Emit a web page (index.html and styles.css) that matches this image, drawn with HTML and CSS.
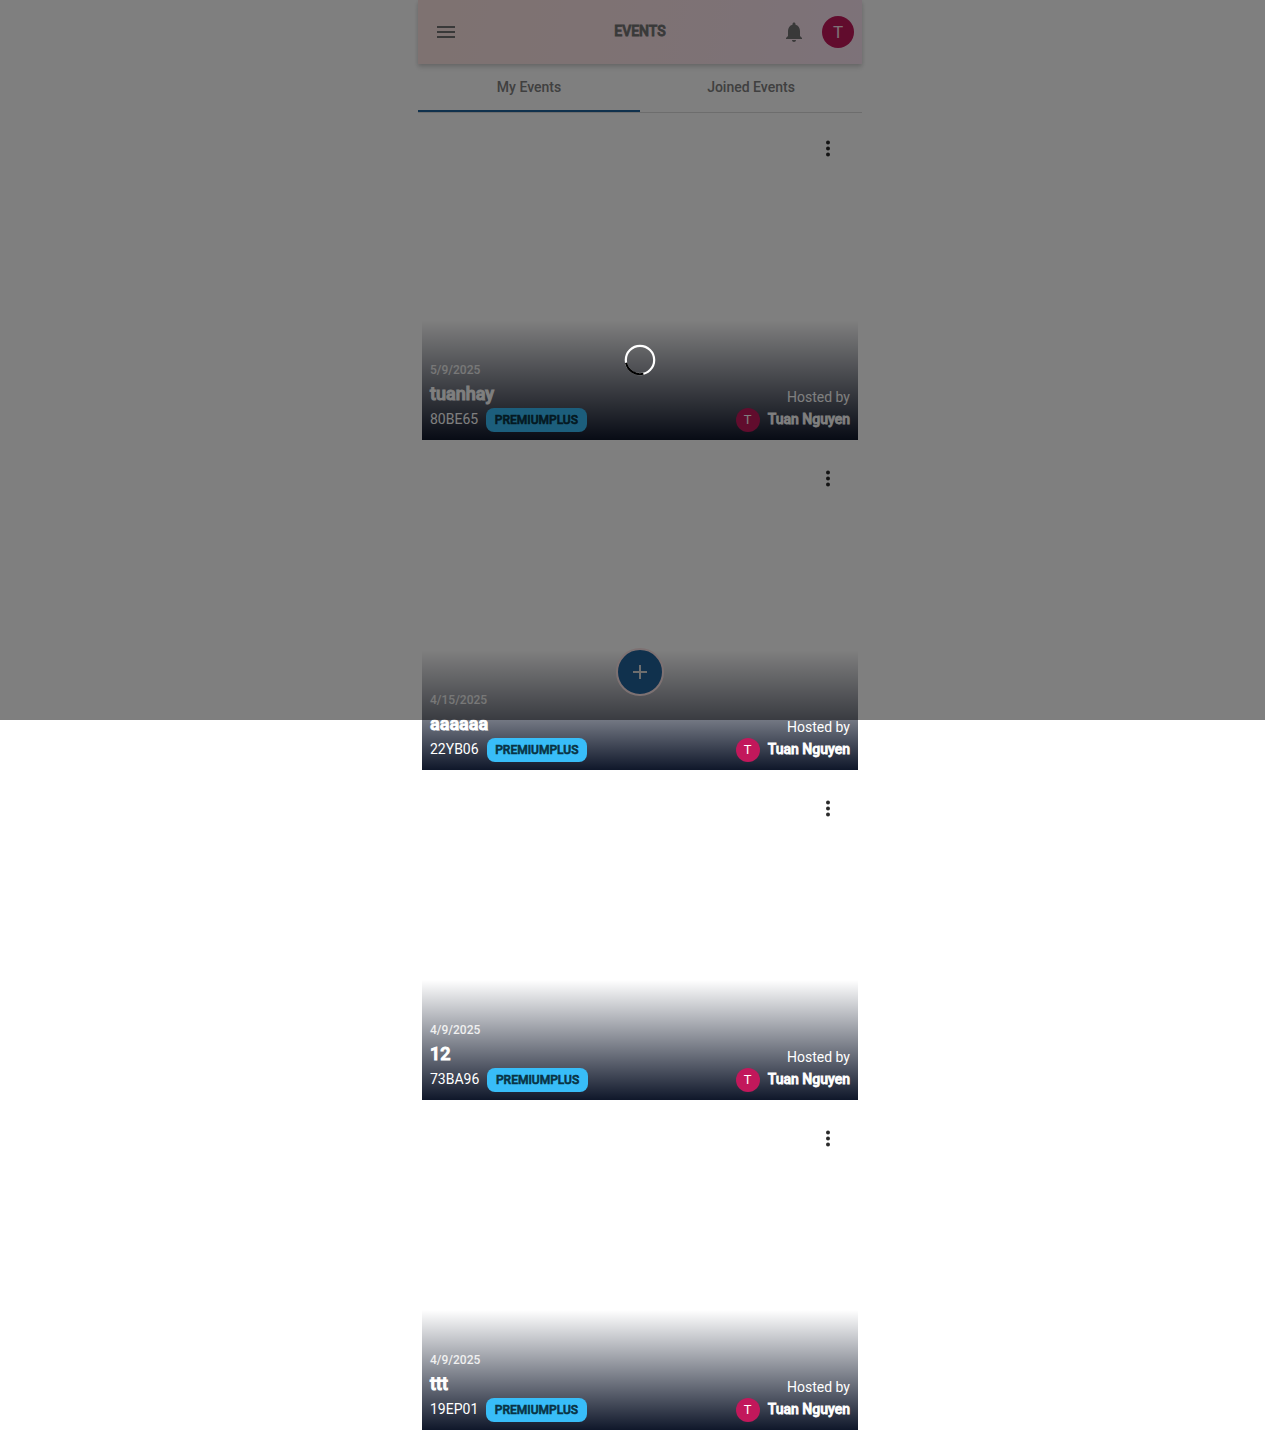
FILE: index.html
```html
<!DOCTYPE html>
<html lang="en">
<head>
<meta charset="utf-8">
<title>Events</title>
<link rel="stylesheet" href="styles.css">
</head>
<body>
<div class="app">
  <header class="bar">
    <svg class="icon menu" viewBox="0 0 24 24"><path d="M3 18h18v-2H3v2zm0-5h18v-2H3v2zm0-7v2h18V6H3z"/></svg>
    <h1 class="heading faux">EVENTS</h1>
    <div class="actions">
      <svg class="icon" viewBox="0 0 24 24"><path d="M12 22c1.1 0 2-.9 2-2h-4c0 1.1.89 2 2 2zm6-6v-5c0-3.07-1.64-5.64-4.5-6.32V4c0-.83-.67-1.5-1.5-1.5s-1.5.67-1.5 1.5v.68C7.63 5.36 6 7.92 6 11v5l-2 2v1h16v-1l-2-2z"/></svg>
      <span class="avatar large">T</span>
    </div>
  </header>
  <nav class="tabs">
    <a class="tab active">My Events</a>
    <a class="tab">Joined Events</a>
  </nav>
  <main class="list">
    <article class="card">
      <svg class="more" viewBox="0 0 24 24"><circle cx="12" cy="6" r="2"/><circle cx="12" cy="12" r="2"/><circle cx="12" cy="18" r="2"/></svg>
      <div class="info">
        <div class="event"><span class="date">5/9/2025</span><h2 class="name faux">tuanhay</h2><div class="row"><span class="code">80BE65</span><span class="badge faux">PREMIUMPLUS</span></div></div>
        <div class="host"><span class="by">Hosted by</span><div class="row"><span class="avatar">T</span><span class="person faux">Tuan Nguyen</span></div></div>
      </div>
    </article>
    <article class="card">
      <svg class="more" viewBox="0 0 24 24"><circle cx="12" cy="6" r="2"/><circle cx="12" cy="12" r="2"/><circle cx="12" cy="18" r="2"/></svg>
      <div class="info">
        <div class="event"><span class="date">4/15/2025</span><h2 class="name faux">aaaaaa</h2><div class="row"><span class="code">22YB06</span><span class="badge faux">PREMIUMPLUS</span></div></div>
        <div class="host"><span class="by">Hosted by</span><div class="row"><span class="avatar">T</span><span class="person faux">Tuan Nguyen</span></div></div>
      </div>
    </article>
    <article class="card">
      <svg class="more" viewBox="0 0 24 24"><circle cx="12" cy="6" r="2"/><circle cx="12" cy="12" r="2"/><circle cx="12" cy="18" r="2"/></svg>
      <div class="info">
        <div class="event"><span class="date">4/9/2025</span><h2 class="name faux">12</h2><div class="row"><span class="code">73BA96</span><span class="badge faux">PREMIUMPLUS</span></div></div>
        <div class="host"><span class="by">Hosted by</span><div class="row"><span class="avatar">T</span><span class="person faux">Tuan Nguyen</span></div></div>
      </div>
    </article>
    <article class="card">
      <svg class="more" viewBox="0 0 24 24"><circle cx="12" cy="6" r="2"/><circle cx="12" cy="12" r="2"/><circle cx="12" cy="18" r="2"/></svg>
      <div class="info">
        <div class="event"><span class="date">4/9/2025</span><h2 class="name faux">ttt</h2><div class="row"><span class="code">19EP01</span><span class="badge faux">PREMIUMPLUS</span></div></div>
        <div class="host"><span class="by">Hosted by</span><div class="row"><span class="avatar">T</span><span class="person faux">Tuan Nguyen</span></div></div>
      </div>
    </article>
  </main>
</div>
<div class="fab"><svg viewBox="0 0 24 24"><path d="M12 5v14M5 12h14"/></svg></div>
<div class="backdrop">
  <svg class="spinner" viewBox="0 0 32 32"><circle cx="16" cy="16" r="14.2" stroke="#fff"/><path d="M2.1 18.8A14.2 14.2 0 0 0 19.4 29.8" stroke="#000"/></svg>
</div>
</body>
</html>
```
FILE: styles.css
```css
* { box-sizing: border-box; }
html { overflow-x: hidden; }
body { position: relative; width: 1280px; height: 1442px; margin: 0; background: #fff; font: 14px/20px Roboto, sans-serif; }
h1, h2 { margin: 0; }
.app { width: 444px; margin: 0 auto; }
.faux { font-weight: 500; -webkit-text-stroke: .8px currentColor; }
.bar { position: relative; height: 64px; padding: 0 8px 0 16px; display: grid; grid-template-columns: 1fr auto 1fr; align-items: center; background: linear-gradient(100deg, #fde4e2, #fce4e8 50%, #fae4f2); box-shadow: 0 2px 4px rgba(0,0,0,.14), 0 4px 6px rgba(0,0,0,.08); }
.icon { width: 24px; height: 24px; fill: #737373; display: block; }
.heading { font-size: 14px; line-height: 20px; color: #737373; padding-bottom: 2px; margin-left: -8px; }
.actions { display: flex; justify-content: flex-end; align-items: center; gap: 16px; }
.avatar { width: 24px; height: 24px; border-radius: 50%; background: #c2185b; color: #fff; display: flex; align-items: center; justify-content: center; font-size: 13px; }
.avatar.large { width: 32px; height: 32px; font-size: 17px; color: #fce4ec; }
.tabs { display: grid; grid-template-columns: 1fr 1fr; height: 49px; border-bottom: 1px solid #dadada; }
.tab { font-weight: 500; text-align: center; padding-top: 13px; color: #808080; margin-bottom: -1px; height: 48px; }
.active { border-bottom: 2px solid #20639b; }
.list { display: grid; gap: 10px; padding: 7px 4px 12px; }
.card { height: 320px; display: flex; flex-direction: column; justify-content: space-between; align-items: flex-end; }
.more { width: 24px; height: 25px; margin: 16px 18px 0 0; fill: #2b2b2b; }
.info { width: 100%; height: 120px; padding: 8px; display: flex; justify-content: space-between; align-items: flex-end; color: #fff; background: linear-gradient(rgba(15,23,42,0), #0f172a); }
.event, .host { display: flex; flex-direction: column; }
.host { align-items: flex-end; }
.date { font-size: 12px; line-height: 16px; font-weight: 500; margin-bottom: 2px; color: #f0f0f0; }
.name { font-size: 18px; line-height: 28px; -webkit-text-stroke-width: 1px; }
.row { display: flex; align-items: center; gap: 8px; height: 24px; }
.code, .person { padding-bottom: 2px; }
.badge { height: 24px; padding: 0 8.6px; border-radius: 8px; background: #38bdf8; color: #083344; font-size: 12px; line-height: 24px; -webkit-text-stroke-width: .6px; }
.by { line-height: 20px; margin-bottom: 1px; }
.fab { position: absolute; left: 616px; top: 648px; width: 48px; height: 48px; border: 2px solid #fbe3e4; border-radius: 50%; background: #20639b; display: grid; place-items: center; }
.fab svg { width: 24px; height: 24px; fill: none; stroke: #ddd; stroke-width: 2; }
.backdrop { position: absolute; left: 0; top: 0; width: 1280px; height: 720px; background: rgba(0,0,0,.5); display: grid; place-items: center; }
.spinner { width: 32px; height: 32px; fill: none; stroke-width: 2.2; }
```
